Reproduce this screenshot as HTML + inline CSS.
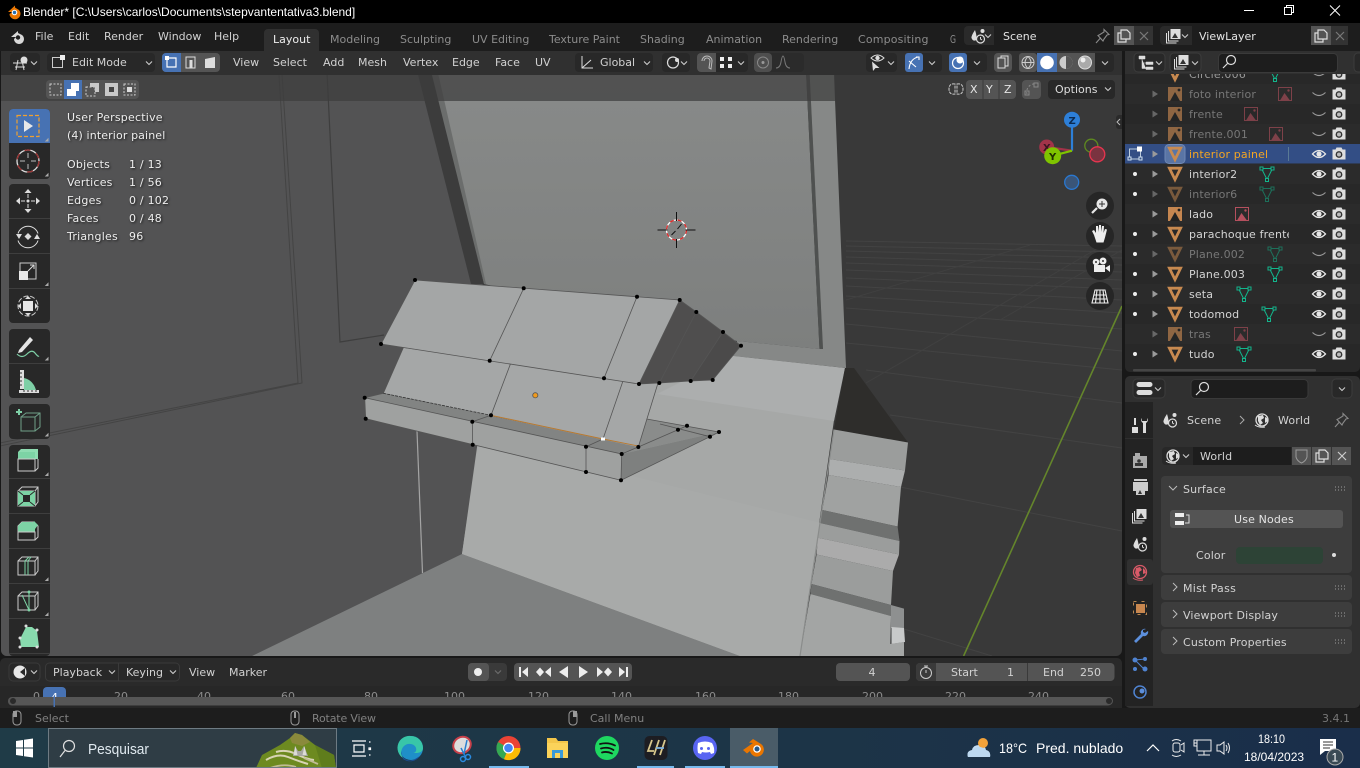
<!DOCTYPE html>
<html><head><meta charset="utf-8"><title>Blender</title>
<style>
html,body{margin:0;padding:0;background:#000;width:1360px;height:768px;overflow:hidden}
svg{display:block;position:absolute;left:0;top:0}
text{font-family:"DejaVu Sans","Liberation Sans",sans-serif;font-size:11px;fill:#d2d2d2;white-space:pre}
.dim{fill:#8c8c8c}.ol{fill:#d4d4d4;letter-spacing:.15px}.old{fill:#777;letter-spacing:.15px}
.pn{letter-spacing:.15px}
.win{font-family:"Liberation Sans",sans-serif}
.vt{fill:#eee;letter-spacing:.22px;filter:drop-shadow(1px 1px 1px rgba(0,0,0,.7))}
.st{fill:#808080}
</style></head><body>
<svg width="1360" height="768" viewBox="0 0 1360 768" xmlns="http://www.w3.org/2000/svg">
<defs>
<clipPath id="vp"><rect x="1" y="51" width="1121" height="605" rx="6"/></clipPath>
<clipPath id="olc"><rect x="1125" y="74" width="235" height="300"/></clipPath>
<clipPath id="tlc"><rect x="0" y="686" width="1122" height="11"/></clipPath>
<clipPath id="sb"><rect x="49" y="730" width="287" height="37"/></clipPath>
<linearGradient id="plate" x1="0" y1="0" x2="0" y2="1"><stop offset="0" stop-color="#898b8a"/><stop offset="1" stop-color="#7d7f7e"/></linearGradient>
<linearGradient id="tb" x1="0" y1="0" x2="1" y2="0"><stop offset="0" stop-color="#1f3b47"/><stop offset=".6" stop-color="#1c3447"/><stop offset="1" stop-color="#1a2e4a"/></linearGradient>
<symbol id="mesh" viewBox="-8 -8 16 16" overflow="visible"><path d="M-5.6-5.800H5.600L0 5.600Z" fill="none" stroke="#c88a50" stroke-width="2.800" stroke-linejoin="miter"/></symbol>
<symbol id="imgo" viewBox="-8 -8 16 16" overflow="visible"><rect x="-7" y="-7" width="14" height="14" fill="#c58650"/><path d="M-5 7L0-2 5 7Z" fill="#222"/><circle cx="4" cy="-4" r="1.400" fill="#222"/></symbol>
<symbol id="tri" viewBox="-8 -8 16 16" overflow="visible"><path d="M-5.500-5.500H5.500L0 5.500Z" fill="none" stroke="#13b58c" stroke-width="1"/><g fill="#282828" stroke="#13b58c"><rect x="-7" y="-7" width="3" height="3"/><rect x="4" y="-7" width="3" height="3"/><rect x="-1.500" y="4.500" width="3" height="3"/></g></symbol>
<symbol id="imgr" viewBox="-8 -8 16 16" overflow="visible"><rect x="-6.500" y="-6.500" width="13" height="13" fill="none" stroke="#b5505e"/><path d="M-5 6.500L-.5-1 5 6.500Z" fill="#b5505e"/><circle cx="3.500" cy="-3.500" r="1.200" fill="#b5505e"/></symbol>
<symbol id="eye" viewBox="-8 -8 16 16" overflow="visible"><path d="M-6.500 0Q0-7 6.500 0Q0 7-6.500 0Z" fill="none" stroke="#e6e6e6" stroke-width="1.300"/><circle r="2.600" fill="#e6e6e6"/></symbol>
<symbol id="eyec" viewBox="-8 -8 16 16" overflow="visible"><path d="M-6.500-1.500Q0 4.500 6.500-1.500" fill="none" stroke="#9a9a9a" stroke-width="1.100"/></symbol>
<symbol id="cam" viewBox="-8 -8 16 16" overflow="visible"><path d="M-6.500-4.500h3l1-2h5l1 2h3v10h-13z" fill="#dedede"/><circle cy=".5" r="3.400" fill="#333"/><circle cy=".5" r="2" fill="#bbb"/></symbol>
<symbol id="arr" viewBox="-4 -4 8 8" overflow="visible"><path d="M-2.500-3.500L3 0-2.500 3.500Z" fill="#9a9a9a"/></symbol>
<symbol id="chev" viewBox="-4 -4 8 8" overflow="visible"><path d="M-3-1.500L0 1.500 3-1.500" fill="none" stroke="#ccc" stroke-width="1.100"/></symbol>
<symbol id="grip" viewBox="0 0 12 6" overflow="visible"><path d="M1 1h1M4 1h1M7 1h1M10 1h1M1 4h1M4 4h1M7 4h1M10 4h1" stroke="#8a8a8a" stroke-width="1.200"/></symbol>
<symbol id="world" viewBox="-8 -8 16 16" overflow="visible"><circle r="6" fill="none" stroke="#ddd" stroke-width="1.300"/><path d="M-4-4L1-5 2-2-1 0 1 3-2 5-4 1ZM3-3l2 1 1 3-3 2Z" fill="#ddd"/><path d="M-7 5Q-3 8 3 7" stroke="#ddd" fill="none"/></symbol>
<symbol id="scene" viewBox="-8 -8 16 16" overflow="visible"><path d="M-3-6Q-7 0-6.500 2Q-5 6-1.500 4Q-1 0-3-6Z" fill="#ddd"/><circle cx="4.500" cy="-5" r="2" fill="#ddd"/><circle cx="2.500" cy="3" r="4" fill="none" stroke="#ddd" stroke-width="1.200"/><path d="M2.500 1v2l1.500 1" stroke="#ddd" fill="none"/></symbol>
<symbol id="layers" viewBox="-8 -8 16 16" overflow="visible"><rect x="-3.500" y="-7" width="10" height="10" fill="#ddd"/><path d="M-2 2L1-3 4 2Z" fill="#333"/><path d="M-5.500-5v10h10M-7.500-3V7H2.500" fill="none" stroke="#ddd"/></symbol>
<symbol id="copy" viewBox="-8 -8 16 16" overflow="visible"><path d="M-3-6H3L6-3V3H-3ZM-3-3H-6V6H2V3" fill="none" stroke="#ddd" stroke-width="1.200"/></symbol>
<symbol id="pin" viewBox="-8 -8 16 16" overflow="visible"><path d="M1-6.500L6-1.500 4-1 1 3 0 5-5-.5-3-1.500 1-4ZM-3 2.500L-7 7" fill="none" stroke="#8a8a8a" stroke-width="1.100"/></symbol>
<symbol id="x" viewBox="-8 -8 16 16" overflow="visible"><path d="M-4-4L4 4M4-4L-4 4" stroke="#ccc" stroke-width="1.200"/></symbol>
<symbol id="mouse" viewBox="0 0 10 16" overflow="visible"><rect x="1" y="1" width="8" height="14" rx="3.500" fill="none" stroke="#9a9a9a"/></symbol>
</defs>

<!-- base -->
<rect width="1360" height="768" fill="#181818"/>
<rect width="1360" height="23" fill="#000"/>
<rect y="23" width="1360" height="28" fill="#1d1d1d"/>

<!-- Title bar -->
<g transform="translate(14,11)"><path d="M-6 1L1-5.500 1-3.500 5-1A5.500 5.500 0 1 1-4.500 3L-1.500 1Z" fill="#ea7600"/><circle cx="0.500" cy="1.500" r="2.800" fill="#fff"/><circle cx="0.500" cy="1.500" r="1.700" fill="#2a6fb0"/></g>
<text class="win" x="23" y="16" style="font-size:12px;fill:#fff">Blender* [C:\Users\carlos\Documents\stepvantentativa3.blend]</text>
<path d="M1244 10.500h10" stroke="#fff"/>
<path d="M1284.500 7.500h7v7h-7zM1286.500 7.500v-2h7v7h-2" fill="none" stroke="#fff"/>
<path d="M1330 5.500l10 10M1340 5.500l-10 10" stroke="#fff"/>

<!-- Top bar -->
<g transform="translate(18,36)"><path d="M-7 1L0-5 0-3 4-1A5 5 0 1 1-4 3L-2 1Z" fill="#d8d8d8"/><circle cx="0" cy="1.500" r="2.200" fill="#1d1d1d"/></g>
<text x="35" y="40">File</text><text x="68" y="40">Edit</text><text x="104" y="40">Render</text><text x="158" y="40">Window</text><text x="214" y="40">Help</text>
<path d="M264 51V33a4 4 0 0 1 4-4h47a4 4 0 0 1 4 4v18z" fill="#303030"/>
<text x="273" y="43" style="fill:#eee">Layout</text>
<g><text class="dim" x="330" y="43">Modeling</text><text class="dim" x="400" y="43">Sculpting</text><text class="dim" x="472" y="43">UV Editing</text><text class="dim" x="549" y="43">Texture Paint</text><text class="dim" x="640" y="43">Shading</text><text class="dim" x="706" y="43">Animation</text><text class="dim" x="782" y="43">Rendering</text><text class="dim" x="858" y="43" style="letter-spacing:.15px">Compositing</text></g>
<text class="dim" x="950" y="43" textLength="6" lengthAdjust="spacingAndGlyphs">G</text>

<rect x="964" y="26" width="189" height="19" rx="4" fill="#2a2a2a"/>
<rect x="994" y="26" width="120" height="19" fill="#1d1d1d"/>
<rect x="1114" y="26" width="20" height="19" fill="#545454"/>
<rect x="1134" y="26" width="19" height="19" fill="#333"/>
<use href="#scene" x="970" y="28" width="16" height="16"/><use href="#chev" x="984" y="32" width="8" height="8"/>
<text x="1003" y="40" style="fill:#e4e4e4">Scene</text>
<use href="#pin" x="1095" y="28" width="16" height="16"/><use href="#copy" x="1116" y="28" width="16" height="16"/>
<g opacity=".45"><use href="#x" x="1136" y="28" width="16" height="16"/></g>
<rect x="1160" y="26" width="188" height="19" rx="4" fill="#2a2a2a"/>
<rect x="1192" y="26" width="119" height="19" fill="#1d1d1d"/>
<rect x="1311" y="26" width="20" height="19" fill="#545454"/>
<rect x="1331" y="26" width="17" height="19" fill="#333"/>
<use href="#layers" x="1166" y="28" width="16" height="16"/><use href="#chev" x="1181" y="32" width="8" height="8"/>
<text x="1199" y="40" style="fill:#e4e4e4">ViewLayer</text>
<use href="#copy" x="1313" y="28" width="16" height="16"/>
<g opacity=".45"><use href="#x" x="1332" y="28" width="16" height="16"/></g>

<!-- VIEWPORT -->
<g clip-path="url(#vp)">
<rect x="0" y="51" width="1122" height="605" fill="#393939"/>
<!-- grid -->
<g stroke="#434343" fill="none">
<path d="M846 343L1122 370M846 324L1122 351M846 308L1122 329M846 296L1122 313M846 286L1122 300M846 278L1122 289M846 270L1122 280M846 263L1122 272M846 257L1122 265M846 251L1122 258M846 246L1122 252M846 241L1122 246"/>
<path d="M866 370L1122 403M890 415L1122 448M900 487L1122 531M904 629L992 656"/>
<path d="M866 383L1100 247M846 300L1030 245M1000 320L1122 250" stroke="#404040"/>
</g>
<path d="M963.600 656L1122 306" stroke="#64852b" stroke-width="1.600"/>
<!-- left wall -->
<path d="M0 51H425L484 290 500 330 480 440 462 556 252 656H0Z" fill="#535354"/>
<path d="M277.500 51L298 383 0 443M280.500 51L302 383 0 446" fill="none" stroke="#444" stroke-width="1"/>
<path d="M326 51L340 342 384 335" fill="none" stroke="#3e3e3e" stroke-width="1.200"/>
<path d="M417 431L422.500 573" stroke="#a5a5a5" stroke-width="1.200"/>
<!-- plate -->
<path d="M432 51H805L819.500 349 737 341 484 284Z" fill="url(#plate)"/>
<!-- strip -->
<path d="M412 51L426 51 484 284 471 284Z" fill="#3c3c3c"/>
<path d="M426 51L433 51 486 284 484 284Z" fill="#6b6d6c"/>
<path d="M805 51H808.500L823 349H819.500Z" fill="#4f5150"/>
<path d="M808.500 51H833L846 368 733 356 737 341 819.500 349 823 349Z" fill="#868887"/>
<!-- floor -->
<path d="M252 656L462 554 740 656Z" fill="#7e8080"/>
<!-- body -->
<path d="M478 440L733 356 844 368 834 420 800 656H740L462 554Z" fill="#a6a8a7"/>
<path d="M657 394L733 356 845 368 834 421Z" fill="#acaeae"/>
<path d="M478 446L632 476 821 523 800 656H740L462 554Z" fill="#a8aaa9"/>
<path d="M845 368L854 368 908 442.500 834 429.500Z" fill="#2e2d2b"/>
<path d="M834 429.500L908 442.500 905 470.500 829.500 459Z" fill="#9b9d9c"/>
<path d="M829.500 459L905 470.500 901 487 828.500 475Z" fill="#acaeae"/>
<path d="M828.500 475L901 487 897.600 526.500 822.300 510Z" fill="#a0a2a1"/>
<path d="M822.300 510L897.600 526.500 899.500 541 820 523Z" fill="#6f7170"/>
<path d="M820 523L899.500 541 899 554.500 818 537.700Z" fill="#9b9d9c"/>
<path d="M818 537.700L899 554.500 893 571 816.600 554.500Z" fill="#ababab"/>
<path d="M816.600 554.500L893 571 891 605 811.500 584Z" fill="#9b9d9c"/>
<path d="M811.500 584L891 605 891 616 810.500 594Z" fill="#6f7170"/>
<path d="M810.500 594L891 616 890 656H800Z" fill="#a3a5a4"/>
<path d="M891 605L904 608.600 904 630 891 628Z" fill="#8e9090"/>
<path d="M891.500 627L904 628 905 642 891.500 644Z" fill="#c8caca"/>
<path d="M890 644L904 642 904 656H890Z" fill="#a5a7a6"/>
<path d="M834 429.500L800 656" stroke="#8a8c8b" stroke-width="1.200"/>

<!-- mesh -->
<path d="M646.700 419L719 432 621.700 454 638.300 447Z" fill="#8a8c8b"/>
<path d="M403.300 347.700L383.300 393.300 638 447 657.700 384Z" fill="#a5a7a7"/>
<path d="M415 280L679.700 300 639 384 381 344Z" fill="#a4a6a6"/>
<path d="M679.700 300L696.300 312 723 332 741 345.700 712.700 380 690.700 381 659.300 383 639 384Z" fill="#4f4e4e"/>
<path d="M723 332L741 345.700 712.700 380 690.700 381Z" fill="#4b4a4a"/>
<path d="M621.700 454L719 432 710 436.700 621 480.300Z" fill="#7e807f"/>
<path d="M364.700 397.700L383.300 393.300 638.300 447 621.700 454Z" fill="#828483"/>
<path d="M364.700 397.700L621.700 454 621 480.300 365.700 418.700Z" fill="#9fa1a0"/>
<g fill="none" stroke="#555" stroke-width=".8">
<path d="M415 280L679.700 300 639 384 381 344Z"/>
<path d="M523.700 288.300L489.700 360.700M637 296.700L604 378.300"/>
<path d="M679.700 300L696.300 312 723 332 741 345.700 712.700 380 690.700 381 659.300 383 639 384"/>
<path d="M696.300 312L659.300 383M723 332L690.700 381"/>
<path d="M403.300 347.700L383.300 393.300M510.300 364.300L491 415.300M622.700 381.700L603 439M657.700 384L638.300 447"/>
<path d="M383.300 393.300L491 415.300" stroke-dasharray="3 1" stroke="#333"/>
<path d="M364.700 397.700L621.700 454 621 480.300 365.700 418.700ZM364.700 397.700L383.300 393.300"/>
<path d="M472.300 421.700L472.700 444.700M586 446.700V472M472.300 421.700L491 415.300M586 446.700L603 439"/>
<path d="M621 480.300L710 436.700 719 432M621.700 454L638.300 447 678 429.700 687 425.700M646.700 419L719 432M660 424L710 436.700"/>
</g>
<path d="M491 415.300L603 439 638 446" fill="none" stroke="#b9792e" stroke-width=".9"/>
<path d="M415 280h0M523.700 288.300h0M637 296.700h0M679.700 300h0M696.300 312h0M723 332h0M741 345.700h0M381 344h0M489.700 360.700h0M604 378.300h0M639 384h0M659.300 383h0M690.700 381h0M712.700 380h0M364.700 397.700h0M365.700 418.700h0M472.300 421.700h0M472.700 444.700h0M586 446.700h0M586 472h0M621.700 454h0M621 480.300h0M638.300 447h0M491 415.300h0M678 429.700h0M687 425.700h0M710 436.700h0M719 432h0" stroke="#000" stroke-width="4" stroke-linecap="round"/>
<rect x="601" y="437.500" width="4" height="3" fill="#fff"/>
<circle cx="535.300" cy="395.300" r="2.600" fill="#f09a1e" stroke="#555" stroke-width=".8"/>

<!-- 3d cursor -->
<g transform="translate(676.500,230)" fill="none">
<circle r="10" stroke="#fff" stroke-width="1.300"/>
<circle r="10" stroke="#e02828" stroke-width="1.300" stroke-dasharray="4 4"/>
<path d="M-19 0H-9M9 0H19M0-18V-9M0 9V18M-5 5L-1 1M1-1L5-6" stroke="#111"/>
</g>
</g>

<!-- translucent tool settings -->
<rect x="1" y="75" width="834" height="26" fill="rgba(61,61,61,.72)"/>
<rect x="1" y="51" width="1121" height="24" fill="#303030"/>

<!-- Viewport header -->
<rect x="10" y="53" width="30" height="19" rx="4" fill="#282828"/>
<g stroke="#ddd" fill="none"><path d="M13 63h14M15 67h10M18 60l-2 10M22 60l2 10"/></g><circle cx="24" cy="60" r="3.500" fill="#ddd"/>
<use href="#chev" x="30" y="59" width="8" height="8"/>
<rect x="47" y="53" width="108" height="19" rx="4" fill="#282828"/>
<g fill="none" stroke="#ccc"><rect x="52.500" y="57.500" width="10" height="10"/></g><rect x="60" y="55" width="5" height="5" fill="#eee"/>
<text x="72" y="66">Edit Mode</text><use href="#chev" x="145" y="59" width="8" height="8"/>
<rect x="162" y="53" width="58" height="19" rx="4" fill="#545454"/>
<path d="M166 53h15v19h-15a4 4 0 0 1-4-4V57a4 4 0 0 1 4-4z" fill="#4772b3"/>
<path d="M167 58h9v9h-9z" fill="none" stroke="#fff" stroke-width="1.200"/><rect x="165" y="56" width="4" height="4" fill="#fff"/>
<path d="M186 57h9v11h-9z" fill="none" stroke="#ddd"/><rect x="189.500" y="60" width="3" height="8" fill="#ddd"/>
<path d="M205 59l10-2v11h-10z" fill="#ddd"/>
<text x="233" y="66">View</text><text x="273" y="66">Select</text><text x="323" y="66">Add</text><text x="358" y="66">Mesh</text><text x="403" y="66">Vertex</text><text x="452" y="66">Edge</text><text x="495" y="66">Face</text><text x="535" y="66">UV</text>
<rect x="575" y="53" width="78" height="19" rx="4" fill="#282828"/>
<path d="M582 56v12h11M582 68l9-8" fill="none" stroke="#ddd"/><text x="600" y="66">Global</text><use href="#chev" x="643" y="59" width="8" height="8"/>
<rect x="662" y="53" width="28" height="19" rx="4" fill="#282828"/>
<circle cx="673" cy="62.500" r="5.500" fill="none" stroke="#ddd" stroke-width="1.200"/><circle cx="677" cy="60" r="2" fill="#ddd"/><use href="#chev" x="680" y="59" width="8" height="8"/>
<rect x="697" y="53" width="51" height="19" rx="4" fill="#282828"/>
<path d="M701 53h15v19h-15a4 4 0 0 1-4-4V57a4 4 0 0 1 4-4z" fill="#545454"/>
<path d="M702 61a5 5 0 0 1 10 0l-1 8-2-1 1-7a3 3 0 0 0-6 0" fill="none" stroke="#bbb"/>
<path d="M720 57h4v4h-4zM728 57h4v4h-4zM720 64h4v4h-4zM728 64h4v4h-4z" fill="#eee"/><use href="#chev" x="737" y="59" width="8" height="8"/>
<rect x="754" y="53" width="50" height="19" rx="4" fill="#2b2b2b"/>
<rect x="754" y="53" width="18" height="19" rx="4" fill="#4e4e4e"/>
<circle cx="763" cy="62.500" r="5.500" fill="none" stroke="#888"/><circle cx="763" cy="62.500" r="1.500" fill="#999"/>
<path d="M776 68q4 0 5-6 1-6 2-6t2 6q1 6 5 6" fill="none" stroke="#777"/>
<rect x="866" y="53" width="31" height="19" rx="4" fill="#282828"/>
<path d="M871 58q6.500-6 13 0-6.500 6-13 0z" fill="none" stroke="#ddd"/><circle cx="877.500" cy="58" r="2.200" fill="#ddd"/><path d="M872 61.500l1 9.500 2.500-3 4 0z" fill="#ddd"/><use href="#chev" x="887" y="59" width="8" height="8"/>
<rect x="905" y="53" width="37" height="19" rx="4" fill="#282828"/>
<rect x="905" y="53" width="18" height="19" rx="3" fill="#4772b3"/>
<path d="M909 69q1-10 9-12M909 61l7 6M916 57h3v3" fill="none" stroke="#fff" stroke-width="1.100"/><use href="#chev" x="928" y="59" width="8" height="8"/>
<rect x="949" y="53" width="38" height="19" rx="4" fill="#282828"/>
<rect x="949" y="53" width="18" height="19" rx="3" fill="#4772b3"/>
<circle cx="958" cy="63" r="5.500" fill="none" stroke="#fff" stroke-width="1.200"/><circle cx="960" cy="60" r="3.500" fill="#fff"/><use href="#chev" x="973" y="59" width="8" height="8"/>
<rect x="994" y="53" width="18" height="19" rx="4" fill="#545454"/>
<path d="M998 58h7v10h-7zM1001 58v-2h7v10h-3" fill="none" stroke="#ddd"/>
<rect x="1019" y="53" width="95" height="19" rx="4" fill="#282828"/>
<rect x="1019" y="53" width="18" height="19" rx="3" fill="#545454"/>
<rect x="1057" y="53" width="38" height="19" fill="#545454"/>
<rect x="1037" y="53" width="20" height="19" fill="#4772b3"/>
<circle cx="1028" cy="62.500" r="6" fill="none" stroke="#ccc"/><path d="M1022 62.500h12M1028 56.500c-4 4-4 8 0 12M1028 56.500c4 4 4 8 0 12" fill="none" stroke="#ccc"/>
<circle cx="1047" cy="62.500" r="6.800" fill="#fff"/>
<circle cx="1066" cy="62.500" r="6.500" fill="#ccc"/><path d="M1066 56v13a6.500 6.500 0 0 0 0-13z" fill="#555"/>
<circle cx="1085" cy="62.500" r="6.500" fill="#aaa" stroke="#ddd"/><circle cx="1083" cy="60" r="2.500" fill="#eee"/>
<use href="#chev" x="1101" y="59" width="8" height="8"/>

<!-- row 2 -->
<rect x="46" y="80" width="93" height="19" rx="4" fill="#545454"/>
<rect x="64" y="80" width="18" height="19" fill="#4772b3"/>
<rect x="50" y="84" width="11" height="11" fill="none" stroke="#ccc" stroke-dasharray="2 1.500"/>
<path d="M71 83h8v8h-3v5h-9v-7h4z" fill="#fff"/>
<rect x="86" y="87" width="9" height="9" fill="none" stroke="#ccc" stroke-dasharray="2 1.500"/><path d="M90 83h9v9h-4v-5h-5z" fill="#c8c8c8"/>
<rect x="105" y="83" width="13" height="13" fill="#c8c8c8"/><rect x="109" y="87" width="5" height="5" fill="#444"/>
<rect x="124" y="84" width="11" height="11" fill="none" stroke="#ccc" stroke-dasharray="2 1.500"/><rect x="127" y="87" width="5" height="5" fill="#ddd"/>

<path d="M955 84q-6-1-6 5t6 5zM957 84q6-1 6 5t-6 5z" fill="none" stroke="#ccc" stroke-dasharray="3 1"/>
<rect x="966" y="80" width="50" height="19" rx="4" fill="#545454"/>
<path d="M983 80v19M999 80v19" stroke="#3a3a3a"/>
<text x="970" y="93" style="fill:#e6e6e6">X</text><text x="986" y="93" style="fill:#e6e6e6">Y</text><text x="1004" y="93" style="fill:#e6e6e6">Z</text>
<rect x="1022" y="80" width="19" height="19" rx="4" fill="#545454"/>
<path d="M1027 94a8 8 0 0 1 9-10" fill="none" stroke="#888" stroke-dasharray="2 2"/><rect x="1025" y="91" width="4" height="4" fill="none" stroke="#888"/><rect x="1034" y="83" width="4" height="4" fill="none" stroke="#888"/>
<rect x="1048" y="80" width="67" height="19" rx="4" fill="#282828"/>
<text x="1055" y="93" style="fill:#ddd">Options</text><use href="#chev" x="1104" y="85" width="8" height="8"/>

<!-- viewport info text -->
<g>
<text class="vt" x="67" y="121">User Perspective</text>
<text class="vt" x="67" y="139" style="letter-spacing:.12px">(4) interior painel</text>
<text class="vt" x="67" y="168">Objects</text><text class="vt" x="129" y="168">1 / 13</text>
<text class="vt" x="67" y="186">Vertices</text><text class="vt" x="129" y="186">1 / 56</text>
<text class="vt" x="67" y="204">Edges</text><text class="vt" x="129" y="204">0 / 102</text>
<text class="vt" x="67" y="222">Faces</text><text class="vt" x="129" y="222">0 / 48</text>
<text class="vt" x="67" y="240">Triangles</text><text class="vt" x="129" y="240">96</text>
</g>

<!-- Toolbar -->
<g fill="#282828">
<rect x="9" y="109" width="41" height="70" rx="4"/>
<rect x="9" y="184" width="41" height="139" rx="4"/>
<rect x="9" y="329" width="41" height="69" rx="4"/>
<rect x="9" y="404" width="41" height="35" rx="4"/>
<rect x="9" y="445" width="41" height="211" rx="4"/>
</g>
<path d="M13 109h33a4 4 0 0 1 4 4v30H9v-30a4 4 0 0 1 4-4z" fill="#4772b3"/>
<path d="M9 218.500h41M9 253.500h41M9 288.500h41M9 363.500h41M9 478.500h41M9 513.500h41M9 548.500h41M9 583.500h41M9 618.500h41M9 653.500h41" stroke="#3e3e3e"/>
<rect x="17" y="115.500" width="22" height="21" fill="none" stroke="#f0a030" stroke-width="1.200" stroke-dasharray="4 2"/>
<path d="M24 120l9 6-9 6z" fill="#e8e8e8"/>
<circle cx="28" cy="161" r="11" fill="none" stroke="#ddd" stroke-width="1.300"/><circle cx="28" cy="161" r="11" fill="none" stroke="#9a3030" stroke-width="1.300" stroke-dasharray="6 6"/>
<path d="M20 161h5M31 161h5M28 153v5M28 164v5" stroke="#bbb"/>
<!-- move -->
<g fill="#ddd"><path d="M28 189l-3.500 4h7zM28 213l-3.500-4h7zM16 201l4-3.500v7zM40 201l-4-3.500v7z"/><circle cx="28" cy="201" r="1.500"/></g><path d="M21 201h4M31 201h4M28 194v4M28 204v4" stroke="#ddd"/>
<!-- rotate -->
<path d="M18 233a10.500 10.500 0 0 1 20 0M38 240a10.500 10.500 0 0 1-20 0" fill="none" stroke="#ddd" transform="translate(0,.5)"/><path d="M28 233l3.500 3.500-3.500 3.500-3.500-3.500z" fill="#ddd"/><path d="M16 234h6l-3 5zM34 239h6l-3-5z" fill="#ddd"/>
<!-- scale -->
<rect x="20" y="263" width="16" height="16" fill="none" stroke="#ccc"/><rect x="19" y="271" width="9" height="9" fill="#e8e8e8"/><path d="M28 271l6-6M30 265h4v4" fill="none" stroke="#ddd"/>
<!-- transform -->
<circle cx="28" cy="306" r="10" fill="none" stroke="#ccc" stroke-dasharray="5 2"/><rect x="23" y="301" width="10" height="10" fill="#e6e6e6"/><path d="M28 296l-3 3h6zM28 316l-3-3h6zM18 306l3-3v6zM38 306l-3-3v6z" fill="#ddd"/>
<!-- annotate -->
<path d="M19 350l11-13 3 3-11 12-4 1z" fill="#e4e4e4"/><path d="M17 354q5 5 10 0t8-1 4 3" fill="none" stroke="#7ecfa6" stroke-width="1.200"/>
<!-- measure -->
<path d="M20 370h4v19h-4z" fill="#ddd"/><path d="M19 390h20v3H19z" fill="#ddd"/><path d="M24 378q9 2 12 12H24z" fill="#7ecfa6"/><path d="M20 373h2M20 377h2M20 381h2M20 385h2M24 390v2M28 390v2M32 390v2M36 390v2" stroke="#333"/>
<!-- add cube -->
<path d="M16 412h6M19 409v6" stroke="#7ecfa6" stroke-width="2"/><path d="M21 417h14v14H21zM21 417l5-4h14v14l-5 4M35 417l5-4" fill="none" stroke="#6f9f88"/>
<!-- extrude -->
<path d="M18 452l3-3h17v10l-3 0H18z" fill="#8fdcb2"/><path d="M18 452h17v7H18z" fill="#7dd3a5"/><path d="M18 459h17v12H18zM35 471l3-3v-9" fill="none" stroke="#ccc"/>
<!-- inset -->
<g transform="translate(0,-3)"><path d="M18 494h17v15H18zM18 494l4-4h16v15l-3 4M35 494l3-4" fill="none" stroke="#ccc"/><path d="M18 494h17v15H18z" fill="#7dd3a5"/><path d="M18 494l5 4M35 494l-5 4M18 509l5-4M35 509l-5-4" stroke="#282828"/><rect x="23" y="498" width="7" height="7" fill="#282828"/></g>
<!-- bevel -->
<path d="M18 526l4-4h11l5 4v11l-3 3H18z" fill="none" stroke="#ccc"/><path d="M18 532v-6l4-4h10l3 4v6z" fill="#7dd3a5"/><path d="M18 532h17v8H18z" fill="none" stroke="#ccc"/><path d="M34 521l4 4-3 4-4-4z" fill="#7dd3a5"/>
<!-- loop cut -->
<path d="M18 561h17v14H18zM18 561l4-4h16v14l-3 4M35 561l3-4" fill="none" stroke="#ccc"/><path d="M25 575v-14l4-4M28 575v-14l3-4" fill="none" stroke="#7dd3a5"/>
<!-- knife -->
<path d="M18 596h17v14H18zM18 596l4-4h16v14l-3 4M35 596l3-4" fill="none" stroke="#ccc"/><path d="M22 595l7 15 0-17" fill="none" stroke="#7dd3a5"/><circle cx="29" cy="592" r="1.500" fill="#7dd3a5"/><circle cx="29" cy="610" r="1.500" fill="#7dd3a5"/>
<!-- poly build -->
<path d="M26 627l6 0 5 4 2 16H21l-1-8z" fill="#88dbae"/><circle cx="26" cy="626" r="1.500" fill="#ddd"/><circle cx="37" cy="630" r="1.500" fill="#ddd"/><circle cx="20" cy="638" r="1.500" fill="#ddd"/><circle cx="20" cy="647" r="1.500" fill="#ddd"/><circle cx="37" cy="647" r="1.500" fill="#ddd"/>
<path d="M48 141v-2l-2 2zM48 176v-2l-2 2zM48 285.500v-2l-2 2zM48 360v-2l-2 2zM48 436v-2l-2 2zM48 475.500v-2l-2 2zM48 580.500v-2l-2 2zM48 615.500v-2l-2 2z" fill="#aaa" stroke="#aaa"/>

<!-- Gizmo -->
<path d="M1072 150.700V127" stroke="#2d7fd8" stroke-width="2.200"/>
<path d="M1072 150.700L1047 147" stroke="#a23349" stroke-width="2.200"/>
<circle cx="1046.700" cy="147" r="7.500" fill="#a23349"/>
<text x="1043" y="151" style="font-size:10px;font-weight:bold;fill:#3a1420">X</text>
<path d="M1072 150.700L1053 155.700" stroke="#7fc400" stroke-width="2.200"/>
<circle cx="1052.700" cy="155.700" r="8.500" fill="#7fc400"/>
<text x="1049" y="160" style="font-size:10px;font-weight:bold;fill:#203000">Y</text>
<circle cx="1072" cy="119.700" r="8" fill="#2d7fd8"/>
<text x="1068.500" y="124" style="font-size:10px;font-weight:bold;fill:#0c2a50">Z</text>
<circle cx="1091.300" cy="145.700" r="6.500" fill="none" stroke="#5e8a20" stroke-width="1.300"/>
<circle cx="1097.300" cy="154.300" r="7.500" fill="#7a3340" stroke="#e8354f" stroke-width="1.300"/>
<circle cx="1071.700" cy="182.300" r="7" fill="#3a5578" stroke="#2a78d0" stroke-width="1.300"/>
<path d="M1122 115h-3a3 3 0 0 0-3 3v8a3 3 0 0 0 3 3h3z" fill="#2a2a2a"/><path d="M1120 119l-3 3 3 3" fill="none" stroke="#bbb"/>
<g fill="#262626"><circle cx="1100" cy="205.700" r="14"/><circle cx="1100" cy="236" r="14"/><circle cx="1100" cy="266" r="14"/><circle cx="1100" cy="296" r="14"/></g>
<circle cx="1102" cy="204" r="5.500" fill="#e6e6e6"/><path d="M1102 201v6M1099 204h6" stroke="#333"/><path d="M1097 208l-5 5" stroke="#e6e6e6" stroke-width="2.200"/>
<path d="M1094 235l-2-4 2-1 2 3v-7l2 0 1 6v-7h2v7l1-6h2l-.5 7 1.500-4 2 .5-2 8-1.500 5h-7z" fill="#eee"/>
<circle cx="1096" cy="262" r="3.300" fill="#eee"/><circle cx="1103" cy="261" r="3.500" fill="#eee"/><rect x="1094" y="265" width="11" height="7" fill="#eee"/><path d="M1105 268l5-3v7z" fill="#eee"/><circle cx="1096" cy="262" r="1" fill="#333"/><circle cx="1103" cy="261" r="1" fill="#333"/>
<path d="M1095 290h10l3 13h-16zM1100 290v13M1093.500 295h13M1092.500 299h15M1097 290l-1.500 13M1103 290l1.500 13" fill="none" stroke="#eee" stroke-width="1.100"/>

<!-- Outliner -->
<rect x="1125" y="51" width="235" height="321" rx="5" fill="#282828"/>
<rect x="1125" y="51" width="235" height="23" fill="#303030"/>
<g fill="#2b2b2b"><rect x="1125" y="84" width="235" height="20"/><rect x="1125" y="124" width="235" height="20"/><rect x="1125" y="164" width="235" height="20"/><rect x="1125" y="204" width="235" height="20"/><rect x="1125" y="244" width="235" height="20"/><rect x="1125" y="284" width="235" height="20"/><rect x="1125" y="324" width="235" height="20"/></g>
<rect x="1134" y="53" width="31" height="19" rx="4" fill="#282828" stroke="#3c3c3c"/>
<path d="M1139 56h6v3h-6zM1146 62h7v2.500h-7zM1146 67h7v2.500h-7zM1142 59v9.500h4M1142 63h4" fill="#ddd" stroke="#ddd" stroke-width=".5"/><use href="#chev" x="1155" y="59" width="8" height="8"/>
<rect x="1170" y="53" width="31" height="19" rx="4" fill="#282828" stroke="#3c3c3c"/>
<use href="#layers" x="1174" y="54" width="16" height="16"/><use href="#chev" x="1191" y="59" width="8" height="8"/>
<rect x="1218.500" y="53.500" width="119" height="19" rx="4" fill="#1d1d1d" stroke="#3a3a3a"/>
<circle cx="1231" cy="60" r="4.500" fill="none" stroke="#ddd" stroke-width="1.200"/><path d="M1227.500 63.500L1223 68" stroke="#ddd" stroke-width="1.200"/>
<rect x="1354" y="53" width="10" height="19" rx="4" fill="#282828" stroke="#3c3c3c"/>

<rect x="1125" y="144" width="235" height="19.500" fill="#334e85"/>
<g clip-path="url(#olc)">
<use href="#mesh" x="1167" y="66" width="16" height="16"/>
<text class="ol" x="1189" y="78" opacity=".65">Circle.006</text>
<use href="#tri" x="1267" y="66" width="16" height="16"/>
<use href="#cam" x="1331" y="66" width="16" height="16"/><use href="#eyec" x="1311" y="66" width="16" height="16"/>
</g>
<!-- arrows -->
<g opacity=".55"><use href="#arr" x="1151" y="90" width="8" height="8"/><use href="#arr" x="1151" y="110" width="8" height="8"/><use href="#arr" x="1151" y="130" width="8" height="8"/><use href="#arr" x="1151" y="190" width="8" height="8"/><use href="#arr" x="1151" y="250" width="8" height="8"/><use href="#arr" x="1151" y="330" width="8" height="8"/></g>
<use href="#arr" x="1151" y="150" width="8" height="8"/><use href="#arr" x="1151" y="170" width="8" height="8"/><use href="#arr" x="1151" y="210" width="8" height="8"/><use href="#arr" x="1151" y="230" width="8" height="8"/><use href="#arr" x="1151" y="270" width="8" height="8"/><use href="#arr" x="1151" y="290" width="8" height="8"/><use href="#arr" x="1151" y="310" width="8" height="8"/><use href="#arr" x="1151" y="350" width="8" height="8"/>
<!-- dots -->
<path d="M1135 174h0M1135 194h0M1135 234h0M1135 254h0M1135 274h0M1135 294h0M1135 314h0M1135 354h0" stroke="#eee" stroke-width="4" stroke-linecap="round"/>
<rect x="1129.500" y="149" width="11" height="10" fill="none" stroke="#bcd"/><rect x="1137" y="146.500" width="5" height="5" fill="#fff"/><rect x="1128" y="157" width="3" height="3" fill="#334e85" stroke="#cde"/><rect x="1139" y="157" width="3" height="3" fill="#334e85" stroke="#cde"/>
<!-- object icons -->
<rect x="1165" y="144.500" width="20" height="19" rx="4" fill="#5a75a5" stroke="#6f88b5"/>
<g opacity=".65"><use href="#imgo" x="1167" y="86" width="16" height="16"/><use href="#imgo" x="1167" y="106" width="16" height="16"/><use href="#imgo" x="1167" y="126" width="16" height="16"/><use href="#imgo" x="1167" y="326" width="16" height="16"/></g>
<use href="#mesh" x="1167" y="146" width="16" height="16"/><use href="#mesh" x="1167" y="166" width="16" height="16"/>
<g opacity=".5"><use href="#mesh" x="1167" y="186" width="16" height="16"/><use href="#mesh" x="1167" y="246" width="16" height="16"/></g>
<use href="#imgo" x="1167" y="206" width="16" height="16"/>
<use href="#mesh" x="1167" y="226" width="16" height="16"/><use href="#mesh" x="1167" y="266" width="16" height="16"/><use href="#mesh" x="1167" y="286" width="16" height="16"/><use href="#mesh" x="1167" y="306" width="16" height="16"/><use href="#mesh" x="1167" y="346" width="16" height="16"/>
<!-- names -->
<text class="old" x="1189" y="98">foto interior</text>
<text class="old" x="1189" y="118">frente</text>
<text class="old" x="1189" y="138">frente.001</text>
<text x="1189" y="158" style="fill:#f5a623;letter-spacing:.15px">interior painel</text>
<text class="ol" x="1189" y="178">interior2</text>
<text class="old" x="1189" y="198">interior6</text>
<text class="ol" x="1189" y="218">lado</text>
<svg x="1189" y="224" width="100" height="20"><text class="ol" x="0" y="14">parachoque frente</text></svg>
<text class="old" x="1189" y="258">Plane.002</text>
<text class="ol" x="1189" y="278">Plane.003</text>
<text class="ol" x="1189" y="298">seta</text>
<text class="ol" x="1189" y="318">todomod</text>
<text class="old" x="1189" y="338">tras</text>
<text class="ol" x="1189" y="358">tudo</text>
<path d="M1288.500 147v14" stroke="#5a7a95"/>
<!-- data icons -->
<g opacity=".6"><use href="#imgr" x="1277" y="86" width="16" height="16"/><use href="#imgr" x="1243" y="106" width="16" height="16"/><use href="#imgr" x="1268" y="126" width="16" height="16"/><use href="#imgr" x="1233" y="326" width="16" height="16"/></g>
<use href="#imgr" x="1234" y="206" width="16" height="16"/>
<use href="#tri" x="1259" y="166" width="16" height="16"/><use href="#tri" x="1236" y="286" width="16" height="16"/><use href="#tri" x="1267" y="266" width="16" height="16"/><use href="#tri" x="1261" y="306" width="16" height="16"/><use href="#tri" x="1236" y="346" width="16" height="16"/>
<g opacity=".5"><use href="#tri" x="1259" y="186" width="16" height="16"/><use href="#tri" x="1267" y="246" width="16" height="16"/></g>
<!-- eyes -->
<use href="#eyec" x="1311" y="86" width="16" height="16"/><use href="#eyec" x="1311" y="106" width="16" height="16"/><use href="#eyec" x="1311" y="126" width="16" height="16"/><use href="#eyec" x="1311" y="186" width="16" height="16"/><use href="#eyec" x="1311" y="246" width="16" height="16"/><use href="#eyec" x="1311" y="326" width="16" height="16"/>
<use href="#eye" x="1311" y="146" width="16" height="16"/><use href="#eye" x="1311" y="166" width="16" height="16"/><use href="#eye" x="1311" y="206" width="16" height="16"/><use href="#eye" x="1311" y="226" width="16" height="16"/><use href="#eye" x="1311" y="266" width="16" height="16"/><use href="#eye" x="1311" y="286" width="16" height="16"/><use href="#eye" x="1311" y="306" width="16" height="16"/><use href="#eye" x="1311" y="346" width="16" height="16"/>
<use href="#cam" x="1331" y="86" width="16" height="16"/><use href="#cam" x="1331" y="106" width="16" height="16"/><use href="#cam" x="1331" y="126" width="16" height="16"/><use href="#cam" x="1331" y="146" width="16" height="16"/><use href="#cam" x="1331" y="166" width="16" height="16"/><use href="#cam" x="1331" y="186" width="16" height="16"/><use href="#cam" x="1331" y="206" width="16" height="16"/><use href="#cam" x="1331" y="226" width="16" height="16"/><use href="#cam" x="1331" y="246" width="16" height="16"/><use href="#cam" x="1331" y="266" width="16" height="16"/><use href="#cam" x="1331" y="286" width="16" height="16"/><use href="#cam" x="1331" y="306" width="16" height="16"/><use href="#cam" x="1331" y="326" width="16" height="16"/><use href="#cam" x="1331" y="346" width="16" height="16"/>
<rect x="1133" y="369" width="183" height="2.500" rx="1" fill="#454545"/>

<!-- Properties -->
<rect x="1125" y="376" width="235" height="332" rx="5" fill="#303030"/>
<rect x="1125" y="402" width="28" height="304" fill="#232323"/>
<rect x="1133" y="379" width="32" height="19" rx="4" fill="#282828" stroke="#3c3c3c"/>
<path d="M1139 382h11a2.500 2.500 0 0 1 0 5h-11a2.500 2.500 0 0 1 0-5zM1139 390h11a2.500 2.500 0 0 1 0 5h-11a2.500 2.500 0 0 1 0-5z" fill="#ddd"/><use href="#chev" x="1154" y="385" width="8" height="8"/>
<rect x="1191" y="379.500" width="117" height="19" rx="4" fill="#1d1d1d" stroke="#3a3a3a"/>
<circle cx="1204" cy="387" r="4.500" fill="none" stroke="#ddd" stroke-width="1.200"/><path d="M1200.500 390.500L1196 395" stroke="#ddd" stroke-width="1.200"/>
<rect x="1332" y="379" width="20" height="19" rx="4" fill="#282828" stroke="#3c3c3c"/><use href="#chev" x="1338" y="385" width="8" height="8"/>
<!-- tabs -->
<rect x="1127" y="559" width="26" height="26" rx="3" fill="#303030"/>
<path d="M1125 438.500h28" stroke="#2e2e2e"/>
<path d="M1134 418v7h2v-7zM1132 427h6v6h-6zM1142 418q-2 3 1 5v10h3v-10q3-2 1-5v3h-5z" fill="#ddd"/>
<path d="M1133 456h14v12h-14zM1135 453h5v3h-5z" fill="#aaa"/><circle cx="1139" cy="461" r="1.800" fill="#333"/><rect x="1135" y="463" width="8" height="3" fill="#333"/>
<path d="M1134 481h13v-2h-13zM1133 482h15v9h-3v4h-9v-4h-3z" fill="#ccc"/><path d="M1138 494l2-4 2 4z" fill="#333"/>
<use href="#layers" x="1132" y="508" width="16" height="16"/>
<use href="#scene" x="1132" y="536" width="16" height="16"/>
<circle cx="1140" cy="572" r="6.500" fill="none" stroke="#d95a68" stroke-width="1.300"/><path d="M1136 568l4-1 2 3-3 2 1 4-3 1-2-4zM1143 568l2 2 1 3-3 1z" fill="#d95a68"/><path d="M1133 578q4 3 10 2" fill="none" stroke="#d95a68"/>
<rect x="1133.500" y="601.500" width="13" height="13" fill="none" stroke="#b9864f" stroke-dasharray="3 5"/><rect x="1136" y="604" width="9" height="9" fill="#c8874f"/>
<path d="M1146 629a4 4 0 0 0-5 5l-7 7 2 2 7-7a4 4 0 0 0 5-5l-3 2-2-1 0-2z" fill="#5c8fdc"/>
<g fill="none" stroke="#4f83d1"><path d="M1135 660l10-1M1135 660l9 9"/></g><g fill="#4f83d1"><circle cx="1135" cy="660" r="2.500"/><circle cx="1145" cy="659" r="2"/><circle cx="1145" cy="669" r="2.500"/><circle cx="1135" cy="669" r="2"/></g>
<circle cx="1140" cy="692" r="6" fill="none" stroke="#4f83d1" stroke-width="1.500"/><circle cx="1142" cy="691" r="2.500" fill="#5c8fdc"/>
<!-- breadcrumb -->
<use href="#scene" x="1162" y="412" width="16" height="16"/><text class="pn" x="1187" y="424">Scene</text>
<path d="M1240 416l4 4-4 4" fill="none" stroke="#aaa"/>
<use href="#world" x="1254" y="412" width="16" height="16"/><text class="pn" x="1278" y="424">World</text>
<use href="#pin" x="1334" y="412" width="16" height="16"/>
<!-- world row -->
<rect x="1162" y="447" width="189" height="18" rx="4" fill="#282828"/>
<rect x="1193" y="447" width="98" height="18" fill="#1d1d1d"/>
<path d="M1292 447h59v18h-59z" fill="#545454"/><path d="M1311.500 447v18M1331.500 447v18" stroke="#333"/>
<use href="#world" x="1165" y="448" width="16" height="16"/><use href="#chev" x="1182" y="452" width="8" height="8"/>
<text class="pn" x="1200" y="460">World</text>
<path d="M1296 450h11v7q-1 4-5.500 6-4.500-2-5.500-6z" fill="none" stroke="#9a9a9a"/>
<use href="#copy" x="1314" y="448" width="16" height="16"/><use href="#x" x="1334" y="448" width="16" height="16"/>
<!-- Panels -->
<g fill="#3d3d3d"><rect x="1161" y="476" width="191" height="97" rx="4"/><rect x="1161" y="575" width="191" height="25" rx="4"/><rect x="1161" y="602" width="191" height="25" rx="4"/><rect x="1161" y="629" width="191" height="25" rx="4"/></g>
<path d="M1169 486l4 4 4-4" fill="none" stroke="#bbb"/><text class="pn" x="1183" y="493">Surface</text><use href="#grip" x="1334" y="486" width="12" height="6"/>
<rect x="1170" y="510" width="173" height="18" rx="3" fill="#545454"/>
<path d="M1175 513h9v4h-9zM1175 521h9v4h-9z" fill="#eee"/><path d="M1186 515h3v8h-4" fill="none" stroke="#ddd"/>
<text class="pn" x="1234" y="523" style="fill:#e4e4e4">Use Nodes</text>
<text class="pn" x="1196" y="559">Color</text>
<rect x="1236" y="547" width="87" height="17" rx="4" fill="#2d4336"/>
<circle cx="1334" cy="555" r="2" fill="#ddd"/>
<path d="M1173 583l4 4-4 4M1173 610l4 4-4 4M1173 637l4 4-4 4" fill="none" stroke="#bbb"/>
<text class="pn" x="1183" y="592" style="letter-spacing:.3px">Mist Pass</text><text class="pn" x="1183" y="619">Viewport Display</text><text class="pn" x="1183" y="646">Custom Properties</text>
<use href="#grip" x="1334" y="585" width="12" height="6"/><use href="#grip" x="1334" y="612" width="12" height="6"/><use href="#grip" x="1334" y="639" width="12" height="6"/>

<!-- Timeline -->
<path d="M5 658h1112a5 5 0 0 1 5 5v45H0v-45a5 5 0 0 1 5-5z" fill="#2a2a2a"/>
<path d="M0 686h1122v22H0z" fill="#272727"/>
<rect x="9" y="663" width="31" height="18" rx="4" fill="#282828" stroke="#3a3a3a"/>
<circle cx="20" cy="672" r="6.500" fill="#e6e6e6"/><path d="M20 672l5-4v8z" fill="#282828"/><use href="#chev" x="30" y="668" width="8" height="8"/>
<rect x="45.500" y="663" width="134" height="18" rx="4" fill="#282828" stroke="#3a3a3a"/><path d="M118.500 663v18" stroke="#3a3a3a"/>
<text x="53" y="676">Playback</text><use href="#chev" x="108" y="668" width="8" height="8"/>
<text x="126" y="676">Keying</text><use href="#chev" x="169" y="668" width="8" height="8"/>
<text x="189" y="676">View</text><text x="229" y="676">Marker</text>
<rect x="468" y="663" width="39" height="18" rx="4" fill="#3a3a3a"/><rect x="468" y="663" width="21" height="18" rx="4" fill="#545454"/>
<circle cx="478" cy="672" r="4" fill="#eee"/><g opacity=".35"><use href="#chev" x="494" y="668" width="8" height="8"/></g>
<rect x="514" y="663" width="118" height="18" rx="4" fill="#545454"/>
<g fill="#eee">
<path d="M519 667h2v10h-2zM528 667v10l-6-5z"/>
<path d="M536 672l4-4.500 4 4.500-4 4.500zM551 667v10l-6-5z"/>
<path d="M568 666v12l-9-6z"/>
<path d="M579 666v12l9-6z"/>
<path d="M597 667v10l6-5zM604 672l4-4.500 4 4.500-4 4.500z"/>
<path d="M619 667v10l6-5zM626 667h2v10h-2z"/>
</g>
<rect x="836" y="663" width="74" height="18" rx="4" fill="#545454"/>
<text x="868.500" y="676">4</text>
<rect x="916" y="663" width="198.500" height="18" rx="4" fill="#545454"/><path d="M920 663h16v18h-16a4 4 0 0 1-4-4v-10a4 4 0 0 1 4-4z" fill="#3a3a3a"/>
<path d="M1027.500 663v18" stroke="#3a3a3a"/>
<circle cx="926" cy="673" r="5.500" fill="none" stroke="#ccc"/><path d="M924 666h4M926 666v2M926 673v-3" stroke="#ccc" fill="none"/>
<text x="951" y="676">Start</text><text x="1007" y="676">1</text><text x="1043" y="676">End</text><text x="1080" y="676">250</text>
<g clip-path="url(#tlc)">
<text class="dim" x="33" y="700">0</text><text class="dim" x="114" y="700">20</text><text class="dim" x="197" y="700">40</text><text class="dim" x="281" y="700">60</text><text class="dim" x="364" y="700">80</text><text class="dim" x="444" y="700">100</text><text class="dim" x="528" y="700">120</text><text class="dim" x="611" y="700">140</text><text class="dim" x="695" y="700">160</text><text class="dim" x="778" y="700">180</text><text class="dim" x="862" y="700">200</text><text class="dim" x="945" y="700">220</text><text class="dim" x="1028" y="700">240</text>
<path d="M47 687h15a4 4 0 0 1 4 4v6H43v-6a4 4 0 0 1 4-4z" fill="#4772b3"/>
<text x="51" y="701" style="fill:#fff">4</text>
</g>
<rect x="8" y="697" width="1104" height="8.500" rx="4" fill="#565656"/>
<circle cx="13" cy="701" r="3.500" fill="#2a2a2a" stroke="#555"/><circle cx="1109" cy="701" r="3.500" fill="#2a2a2a" stroke="#555"/>
<rect x="53.500" y="697" width="1.500" height="10" fill="#4772b3"/>

<!-- Status bar -->
<rect y="708" width="1360" height="20" fill="#1d1d1d"/>
<use href="#mouse" x="12" y="710" width="10" height="16"/><path d="M13 711h4v6h-4z" fill="#9a9a9a"/><text class="st" x="35" y="722">Select</text>
<use href="#mouse" x="290" y="710" width="10" height="16"/><rect x="294" y="712" width="2" height="6" fill="#9a9a9a"/><text class="st" x="312" y="722" textLength="64">Rotate View</text>
<use href="#mouse" x="568" y="710" width="10" height="16"/><path d="M573 711h4v6h-4z" fill="#9a9a9a"/><text class="st" x="590" y="722">Call Menu</text>
<text class="st" x="1322" y="722" style="fill:#777">3.4.1</text>

<!-- Taskbar -->
<rect y="728" width="1360" height="40" fill="url(#tb)"/>
<path d="M16 741l7-1v7.500h-7zM24 739.800l9-1.300v9h-9zM16 748.500h7V756l-7-1zM24 748.500h9v9l-9-1.300z" fill="#fff"/>
<rect x="48.500" y="728.500" width="288" height="39" fill="#2f3d45" stroke="#6e7b83"/>
<circle cx="69" cy="746" r="5.500" fill="none" stroke="#e0e0e0" stroke-width="1.200"/><path d="M65 750.500L60 757" stroke="#e0e0e0" stroke-width="1.200"/>
<text class="win" x="88" y="754" textLength="61" lengthAdjust="spacingAndGlyphs" style="font-size:14.500px;fill:#dfe9ef">Pesquisar</text>
<g clip-path="url(#sb)">
<path d="M256 768L262 755 280 745 290 738 295 733 302 735 315 745 334 755 336 768Z" fill="#6d8a20"/>
<path d="M290 738l5-5 7 2 8 7-8 4-10-3z" fill="#8a8a3c"/>
<path d="M315 745l19 10 2 13h-14z" fill="#5f7d1c"/>
<path d="M266 760q12-7 22-3t20 7M276 752q10-3 20 2t18 6" fill="none" stroke="#d8d4b4" stroke-width="2"/>
<path d="M270 768q14-5 26-1M304 758l14 6" fill="none" stroke="#c0bc94" stroke-width="1.800"/>
<path d="M293 756l2-10 3 5 3 0 3-5 4 10z" fill="#a8a8a2"/>
<path d="M295.500 746l-2 9h4zM304.500 746l-2 9h4z" fill="#dcdcd6"/>
</g>
<path d="M352 741h14M352 756h14M354 745h10v7h-10zM369 742h1.500M369 748h1.500v1.500H369zM369 755h1.500" fill="none" stroke="#fff" stroke-width="1.200"/>
<!-- Edge -->
<circle cx="411" cy="748" r="12" fill="#1f8fc8"/><path d="M411 736a12 12 0 0 1 12 12c0 4-4 5-7 5h-3c2 0 4-2 3-5-1-4-8-6-12-2-4 4-3 9-1 12a12 12 0 0 1 8-22z" fill="#38c6a8"/><path d="M401 751a9 9 0 0 0 14 8l5-3a12 12 0 0 1-17 3z" fill="#1a4f9a"/>
<!-- Snip -->
<ellipse cx="462" cy="745" rx="9" ry="8" fill="#ddd" stroke="#c8404a" stroke-width="2" transform="rotate(-30 462 745)"/><path d="M461 748l4 8M467 740l-3 14" stroke="#2a7fd0" stroke-width="1.500"/><circle cx="463" cy="759" r="2.500" fill="none" stroke="#2a8ae0" stroke-width="1.500"/><circle cx="468" cy="757" r="2.500" fill="none" stroke="#2a8ae0" stroke-width="1.500"/>
<!-- Chrome -->
<circle cx="508.500" cy="748" r="12" fill="#ea4335"/><path d="M508.500 748l-10.400-6A12 12 0 0 0 504 759.300z" fill="#34a853"/><path d="M508.500 748H520.500A12 12 0 0 1 504 759.300z" fill="#fbbc05"/><circle cx="508.500" cy="748" r="5.500" fill="#fff"/><circle cx="508.500" cy="748" r="4.300" fill="#4285f4"/>
<!-- Folder -->
<path d="M547 738h9l2 3h10v17h-21z" fill="#f3c64a"/><path d="M547 743h21v15h-21z" fill="#fbd35a"/><rect x="552" y="750" width="11" height="8" fill="#3a9ad8"/><rect x="555" y="753" width="5" height="5" fill="#fbd35a"/>
<!-- Spotify -->
<circle cx="607" cy="748" r="12" fill="#1ed760"/><path d="M600 744q8-2 15 1.500M601 748.500q7-2 12.500 1.500M602 752.500q5-1.500 10 1" fill="none" stroke="#111" stroke-width="1.800" stroke-linecap="round"/>
<!-- LH -->
<rect x="644.500" y="736" width="23" height="24" rx="5" fill="#1d1d22"/><path d="M652 740l-4 11h6M659 740l-5 15M665 740l-5 15" fill="none" stroke="#d8c78c" stroke-width="1.800"/><path d="M656 748h8" stroke="#7fb3e0" stroke-width="1.800"/>
<!-- Discord -->
<circle cx="705" cy="748" r="12" fill="#5865f2"/><path d="M698 743q7-3 14 0 3 5 2 10l-3 1-1-2q-4 1-8 0l-1 2-3-1q-1-5 0-10z" fill="#fff"/><circle cx="701.500" cy="748.500" r="1.500" fill="#5865f2"/><circle cx="708.500" cy="748.500" r="1.500" fill="#5865f2"/>
<!-- Blender -->
<rect x="730" y="728" width="48" height="40" fill="#4a5c68"/>
<path d="M743 750l10-7-4-.5 4-3.500 8 5a7 7 0 1 1-11 7l-3 2.500z" fill="#ea7600"/><circle cx="757" cy="749" r="3.800" fill="#fff"/><circle cx="757" cy="749" r="2.500" fill="#265787"/>
<!-- underlines -->
<g fill="#76b9ed"><rect x="489" y="766" width="40" height="2"/><rect x="637" y="766" width="37" height="2"/><rect x="685" y="766" width="40" height="2"/><rect x="730" y="766" width="48" height="2"/></g>
<!-- Tray -->
<path d="M968 757q-2-6 4-7 1-5 7-5 6 0 7 5 5 1 4 7z" fill="#c4dcf2"/><circle cx="983" cy="743" r="5" fill="#f2a23a"/><path d="M968 757q-2-5 4-6 2-4 7-4 5 0 7 4 5 1 4 6z" fill="#bcd8f0"/>
<text class="win" x="999" y="753" textLength="28" lengthAdjust="spacingAndGlyphs" style="font-size:14px;fill:#fff">18°C</text>
<text class="win" x="1036" y="753" style="font-size:14px;fill:#fff">Pred. nublado</text>
<path d="M1147 751l6-6 6 6" fill="none" stroke="#fff" stroke-width="1.200"/>
<rect x="1173" y="743" width="7" height="9" rx="2" fill="none" stroke="#eee"/><path d="M1181 745l3-2v9l-3-2M1172 741q4-3 9 0M1172 755q4 3 9 0" fill="none" stroke="#eee"/>
<path d="M1197 740h-3v6h3M1194.500 743h3M1197 740h14v11h-14zM1204 751v4M1198 755h12" fill="none" stroke="#eee"/>
<path d="M1217 745h3l4-3v12l-4-3h-3zM1226 745q2 3 0 6M1228 743q3 5 0 10" fill="none" stroke="#eee"/>
<text class="win" x="1258" y="743" textLength="27" lengthAdjust="spacingAndGlyphs" style="font-size:12px;fill:#fff">18:10</text>
<text class="win" x="1244" y="761" style="font-size:12px;fill:#fff">18/04/2023</text>
<path d="M1320 739h16v12h-11l-5 4z" fill="#fff"/><path d="M1323 742h10M1323 745h10M1323 748h7" stroke="#333"/>
<circle cx="1335" cy="757" r="8" fill="#3a4a55" stroke="#aaa"/><text class="win" x="1331.500" y="761.500" style="font-size:12px;fill:#fff">1</text>
</svg>
</body></html>
